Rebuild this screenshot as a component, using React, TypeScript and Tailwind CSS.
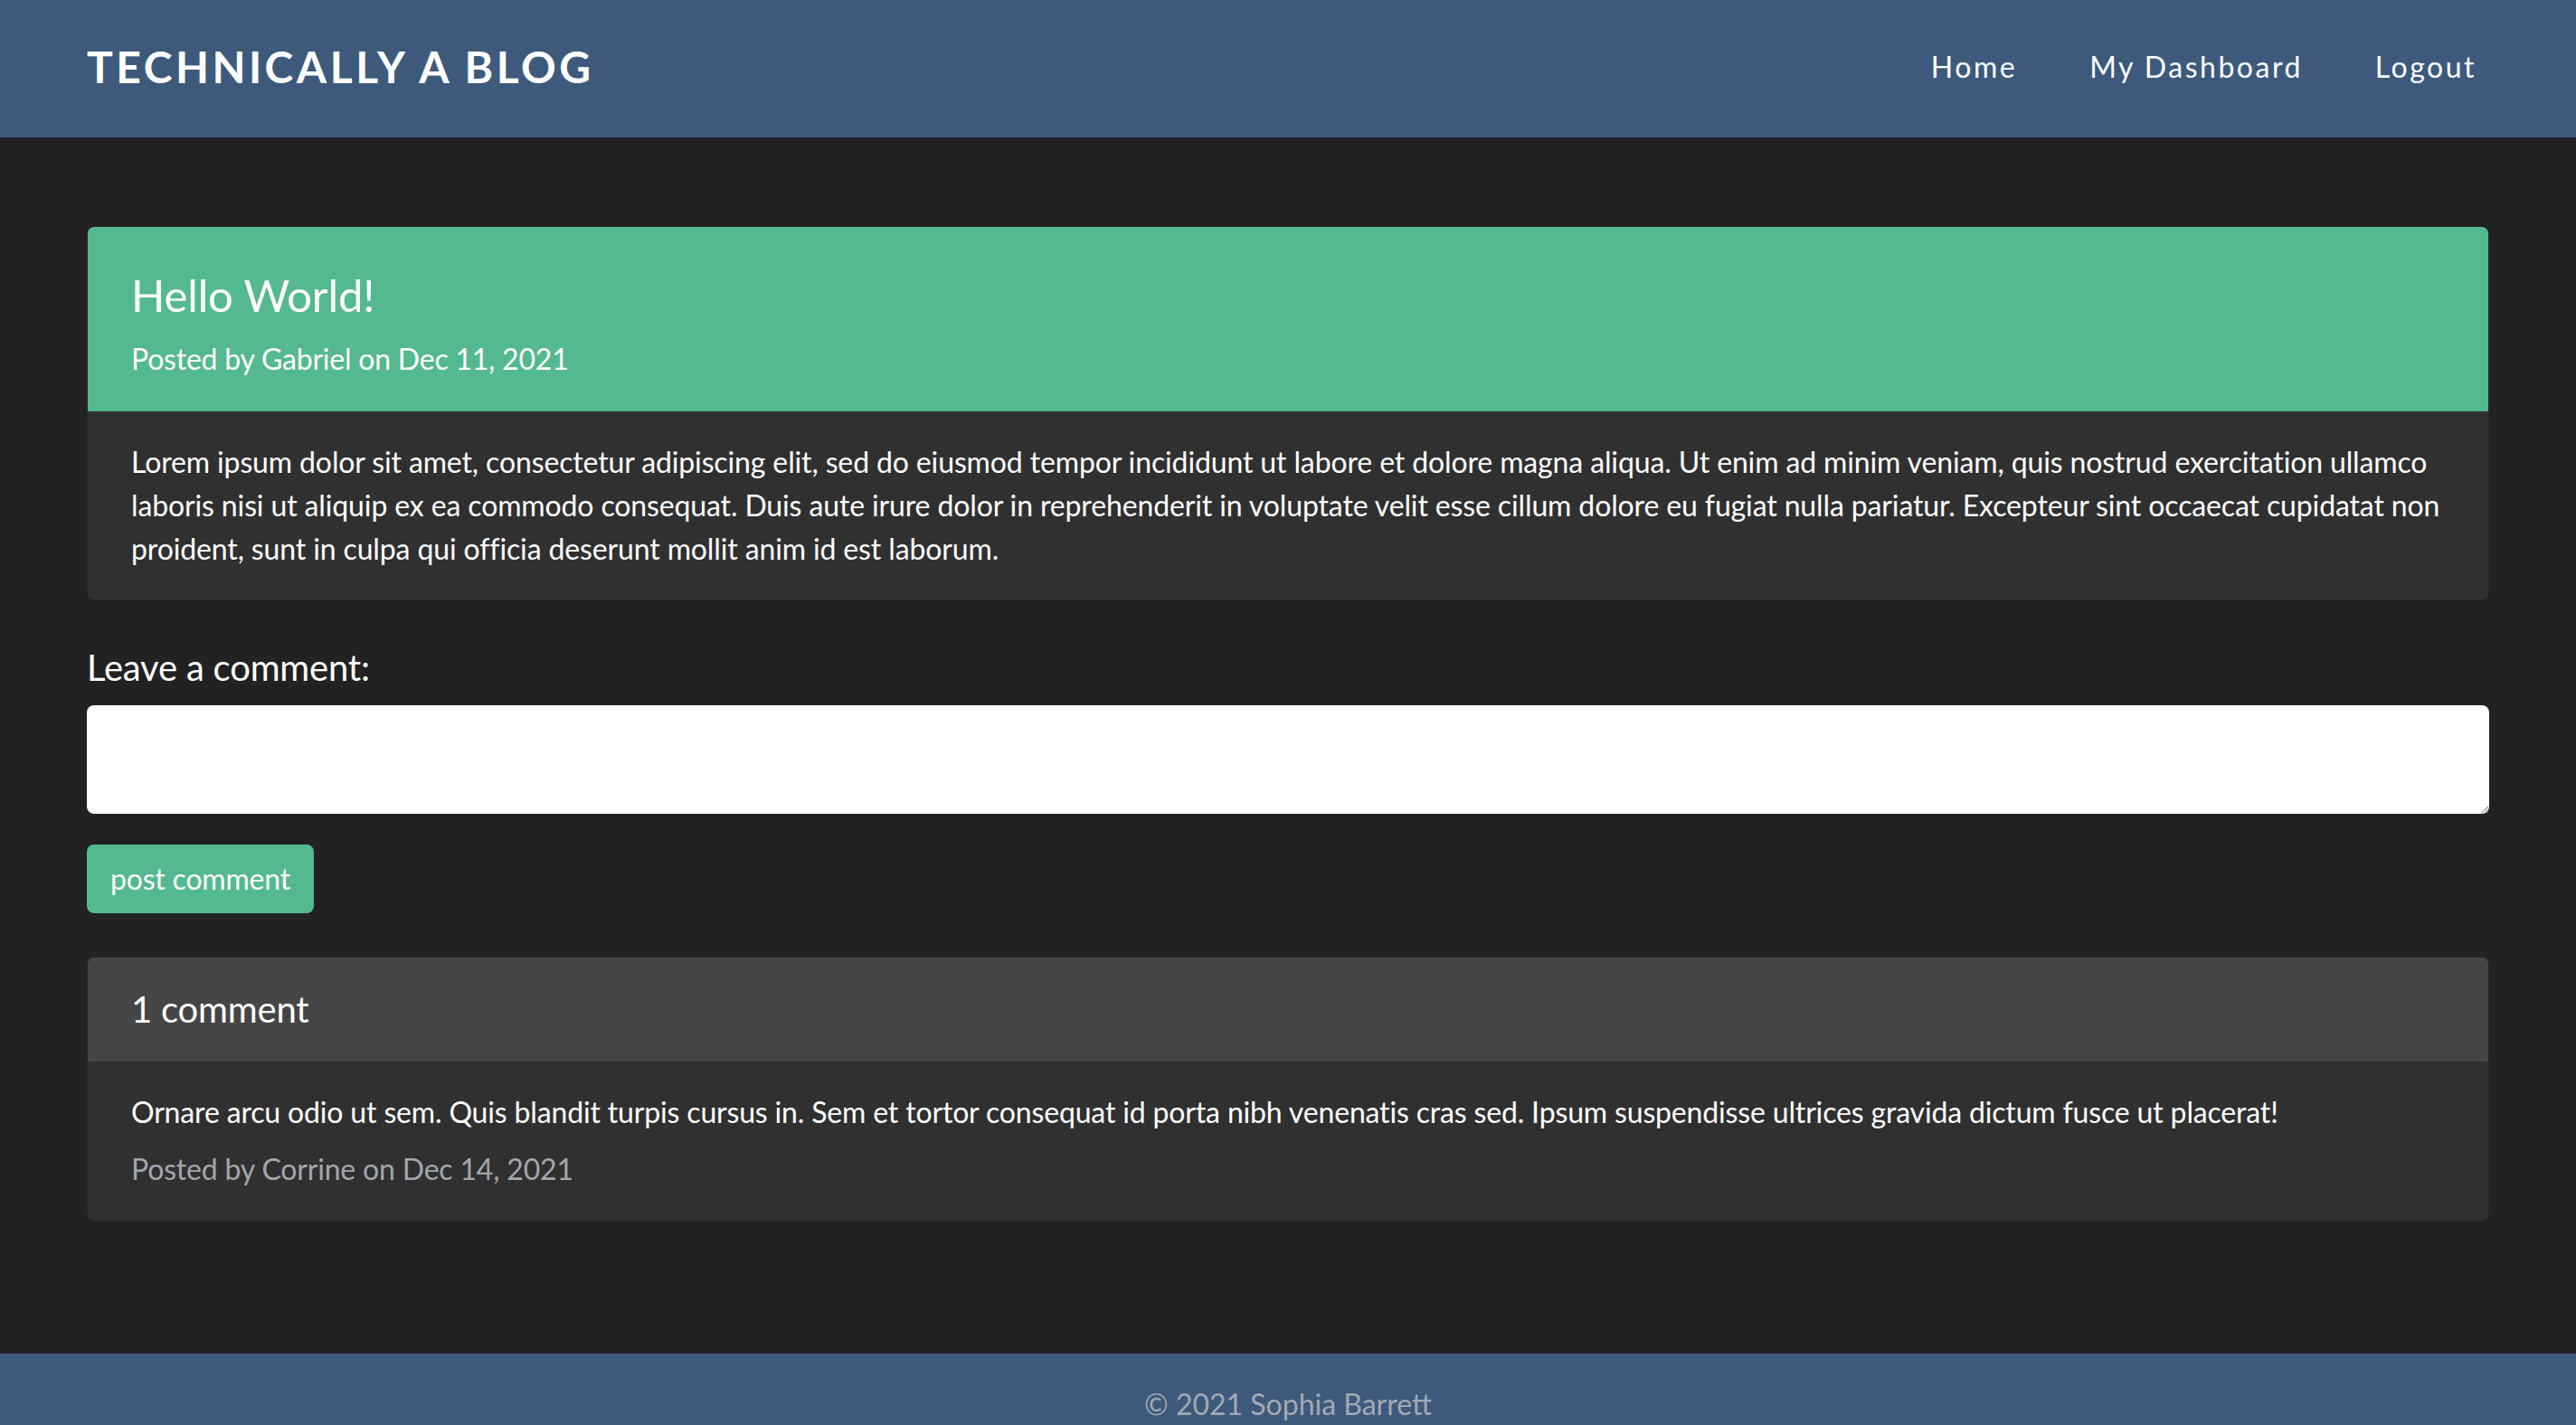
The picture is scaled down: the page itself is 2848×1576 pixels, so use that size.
import React from "react";

export default function App() {
  return (
    <div className="min-h-screen bg-[#222222] text-white font-['Lato','Open_Sans',sans-serif]">
      <header className="h-[152px] bg-[#3d5a7c] flex items-center justify-between pl-[96px] pr-[110px]">
        <h1 className="text-[48px] leading-[57.6px] font-bold uppercase tracking-[3.5px] mt-[-4px]">
          Technically a Blog
        </h1>
        <nav className="flex items-center gap-[80px] text-[32px] leading-[48px] tracking-[2.5px] mt-[-4px]">
          <a href="#">Home</a>
          <a href="#">My Dashboard</a>
          <a href="#">Logout</a>
        </nav>
      </header>

      <main className="px-[96px] pt-[98px] pb-[146px]">
        <section className="rounded-[8px] overflow-hidden border border-black/20 bg-[#303030]">
          <div className="bg-[#54b98f] px-[48px] pt-[47px] pb-[33px] border-b border-black/10">
            <h2 className="text-[49px] leading-[57.6px] tracking-[-0.15px]">Hello World!</h2>
            <p className="text-[32px] leading-[48px] mt-[17px] tracking-[-0.22px]">Posted by Gabriel on Dec 11, 2021</p>
          </div>
          <div className="px-[48px] py-[32px] text-[32px] leading-[48px] tracking-[-0.13px]">
            Lorem ipsum dolor sit amet, consectetur adipiscing elit, sed do eiusmod tempor incididunt ut labore et dolore magna aliqua. Ut enim ad minim veniam, quis nostrud exercitation ullamco laboris nisi ut aliquip ex ea commodo consequat. Duis aute irure dolor in reprehenderit in voluptate velit esse cillum dolore eu fugiat nulla pariatur. Excepteur sint occaecat cupidatat non proident, sunt in culpa qui officia deserunt mollit anim id est laborum.
          </div>
        </section>

        <form className="mt-[50px] flex flex-col items-start" onSubmit={(e) => e.preventDefault()}>
          <label className="text-[40px] leading-[48px] tracking-[-0.2px]">Leave a comment:</label>
          <textarea className="mt-[18px] w-full h-[120px] rounded-[8px] bg-white text-black p-[12px] text-[32px] outline-none" />
          <button
            type="submit"
            className="mt-[34px] bg-[#54b98f] rounded-[8px] px-[26px] py-[14px] text-[32px] leading-[48px] text-white tracking-[-0.2px]"
          >
            post comment
          </button>
        </form>

        <section className="mt-[48px] rounded-[8px] overflow-hidden border border-black/20 bg-[#303030]">
          <div className="bg-[#454545] px-[48px] pt-[33px] pb-[33px] border-b border-black/10">
            <h3 className="text-[40px] leading-[48px] tracking-[-0.2px]">1 comment</h3>
          </div>
          <div className="px-[48px] pt-[32px] pb-[33px]">
            <p className="text-[32px] leading-[48px] tracking-[-0.16px]">
              Ornare arcu odio ut sem. Quis blandit turpis cursus in. Sem et tortor consequat id porta nibh venenatis cras sed. Ipsum suspendisse ultrices gravida dictum fusce ut placerat!
            </p>
            <p className="text-[32px] leading-[48px] mt-[15px] text-[#a2a7ae] tracking-[-0.18px]">Posted by Corrine on Dec 14, 2021</p>
          </div>
        </section>
      </main>

      <footer className="bg-[#3d5a7c] py-[32px] text-center text-[32px] leading-[48px] text-[#a3a9b2]">
        © 2021 Sophia Barrett
      </footer>
    </div>
  );
}
